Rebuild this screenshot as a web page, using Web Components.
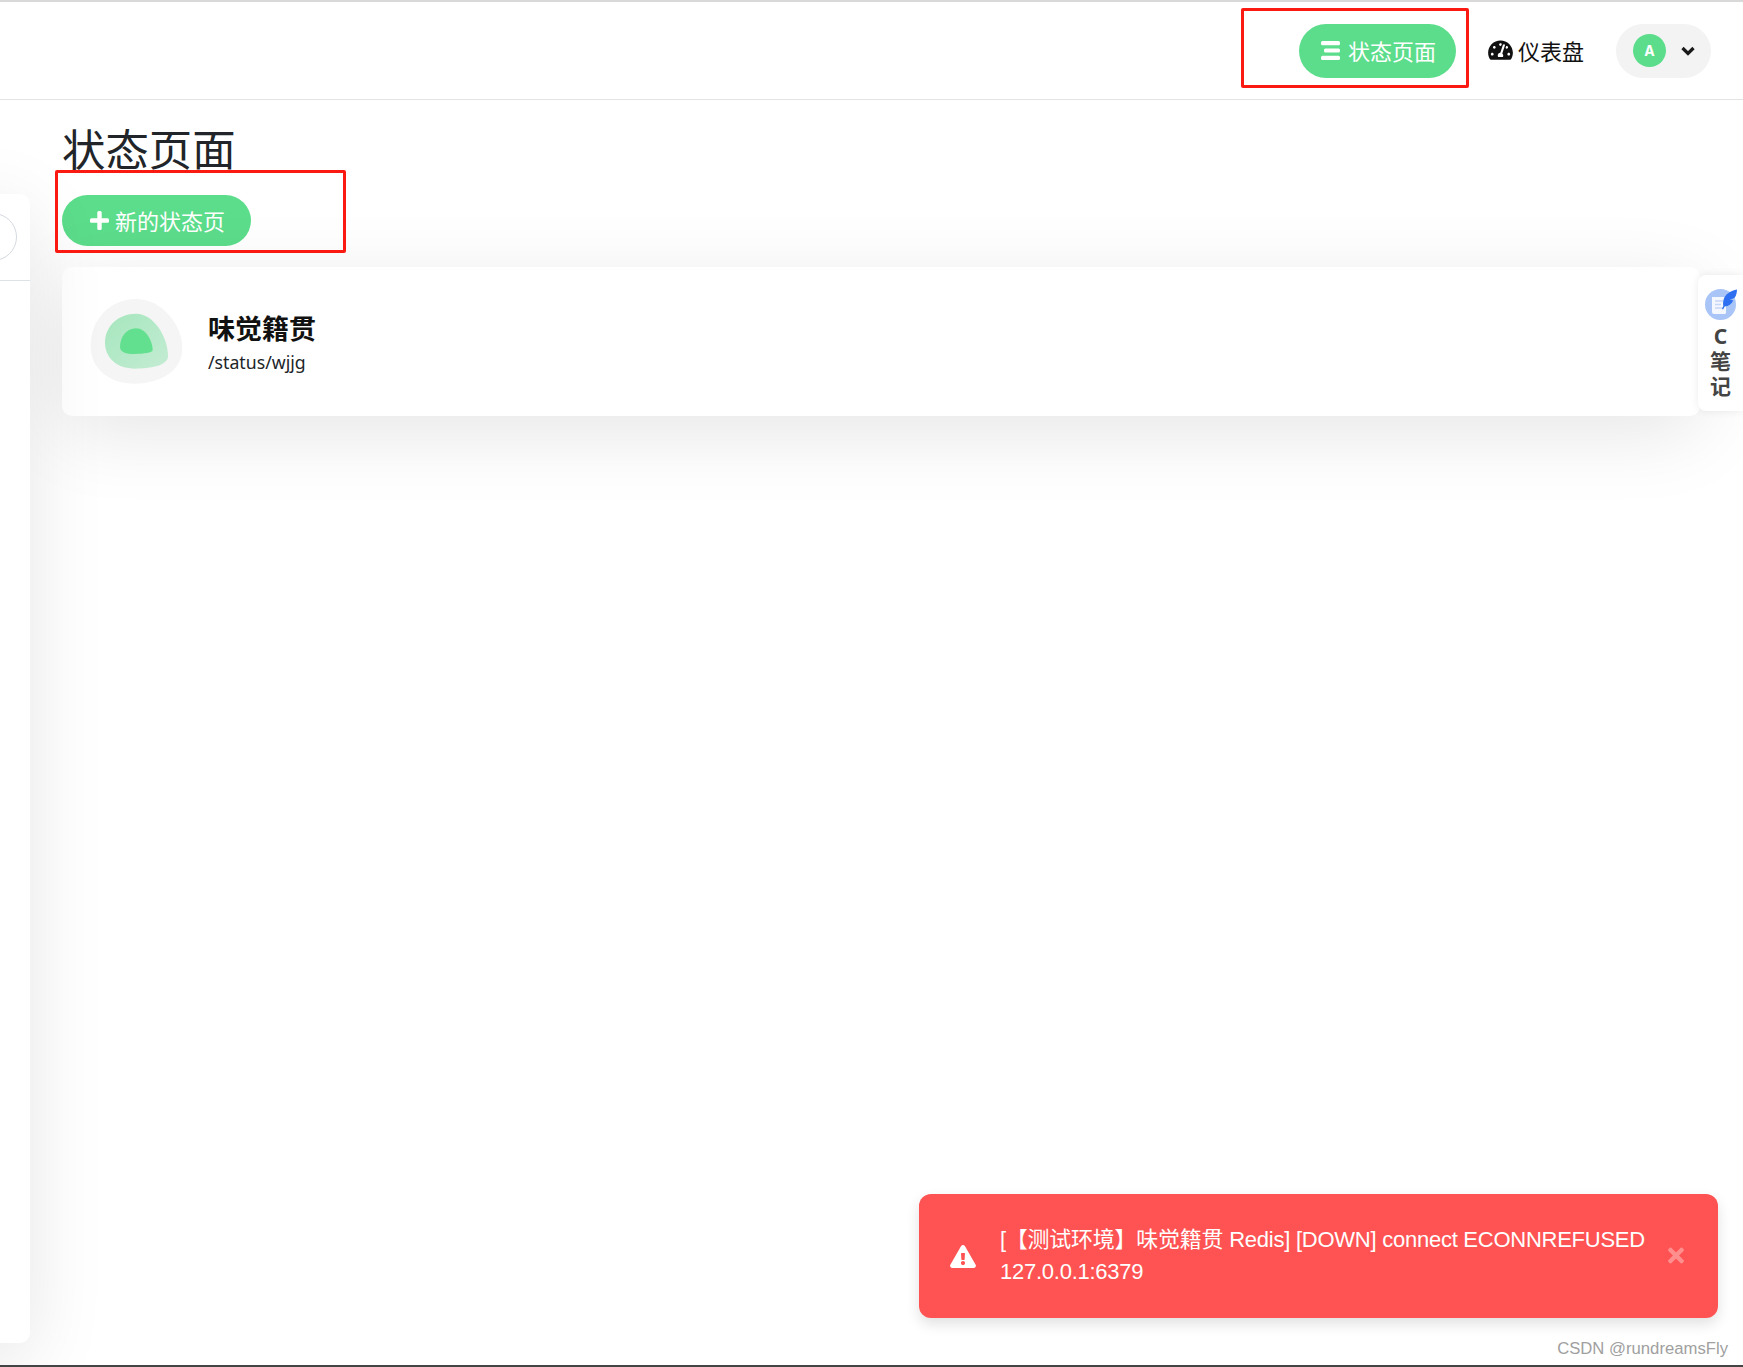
<!DOCTYPE html>
<html lang="zh">
<head>
<meta charset="utf-8">
<title>状态页面</title>
<style>
  html, body { margin: 0; height: 100%; }
  body {
    box-sizing: border-box;
    height: 1367px;
    overflow: hidden;
    display: flex;
    flex-direction: column;
    background: #fff;
    color: #212529;
    border-bottom: 2px solid #444;
    font-family: "Noto Sans", "Noto Sans CJK SC", sans-serif;
  }
</style>
</head>
<body>
  <top-bar>
    <pill-button icon="list" size="header">状态页面</pill-button>
    <nav-link>仪表盘</nav-link>
    <profile-pill>A</profile-pill>
  </top-bar>
  <status-page heading="状态页面">
    <pill-button icon="plus" size="new">新的状态页</pill-button>
    <status-card name="味觉籍贯" slug="/status/wjjg"></status-card>
  </status-page>
  <mark-box style="left:1241px;top:8px;width:228px;height:80px"></mark-box>
  <mark-box style="left:55px;top:170px;width:291px;height:83px"></mark-box>
  <note-tab>C笔记</note-tab>
  <alert-toast>[【测试环境】味觉籍贯 Redis] [DOWN] connect ECONNREFUSED 127.0.0.1:6379</alert-toast>
  <water-mark>CSDN @rundreamsFly</water-mark>

<script>
class TopBar extends HTMLElement {
  connectedCallback() {
    this.attachShadow({ mode: 'open' });
    this.shadowRoot.innerHTML = `
      <style>
        :host {
          display: flex;
          flex: none;
          box-sizing: border-box;
          height: 100px;
          align-items: center;
          justify-content: flex-end;
          gap: 32px;
          padding-right: 32px;
          border-top: 2px solid #d9d9d9;
          border-bottom: 1px solid #e3e3e3;
        }
      </style>
      <slot></slot>`;
  }
}

class PillButton extends HTMLElement {
  connectedCallback() {
    const icons = {
      list: `<svg width="19" height="19" viewBox="0 0 19 19" fill="#fff"><rect x="0" y="0" width="19" height="4.200" rx="1.500"/><rect x="3" y="7.400" width="16" height="4.200" rx="1.500"/><rect x="0" y="14.800" width="19" height="4.200" rx="1.500"/></svg>`,
      plus: `<svg width="19" height="19" viewBox="0 0 19 19" fill="#fff"><rect x="7.300" y="0" width="4.400" height="19" rx="1.500"/><rect x="0" y="7.300" width="19" height="4.400" rx="1.500"/></svg>`
    };
    this.attachShadow({ mode: 'open' });
    this.shadowRoot.innerHTML = `
      <style>
        :host {
          display: inline-flex;
          width: max-content;
          align-items: center;
          box-sizing: border-box;
          background: #5cdd8b;
          color: #fff;
          font-size: 22px;
          border-radius: 27px;
        }
        :host([size="header"]) { height: 54px; padding: 0 20px 1px 22px; gap: 8px; }
        :host([size="new"]) { height: 51px; padding: 0 26px 1px 28px; gap: 6px; }
        svg { display: block; }
      </style>
      ${icons[this.getAttribute('icon')]}<slot></slot>`;
  }
}

class NavLink extends HTMLElement {
  connectedCallback() {
    this.attachShadow({ mode: 'open' });
    this.shadowRoot.innerHTML = `
      <style>
        :host { display: inline-flex; align-items: center; gap: 5px; font-size: 22px; color: #111; padding-bottom: 1px; }
        svg { display: block; }
      </style>
      <svg width="25" height="22" viewBox="0 0 576 512" fill="#111"><path d="M288 32C128.94 32 0 160.94 0 320c0 52.8 14.25 102.26 39.06 144.8 5.61 9.62 16.3 15.2 27.44 15.2h443c11.14 0 21.83-5.58 27.44-15.2C561.75 422.26 576 372.8 576 320c0-159.06-128.94-288-288-288zm0 64c14.71 0 26.58 10.13 30.32 23.65-1.11 2.26-2.64 4.23-3.45 6.67l-9.22 27.67c-5.13 3.49-10.97 6.01-17.64 6.01-17.67 0-32-14.33-32-32S270.33 96 288 96zM96 384c-17.67 0-32-14.33-32-32s14.33-32 32-32 32 14.33 32 32-14.33 32-32 32zm48-160c-17.67 0-32-14.33-32-32s14.33-32 32-32 32 14.33 32 32-14.33 32-32 32zm246.77-72.41l-61.33 184C343.13 347.33 352 364.54 352 384c0 11.72-3.38 22.55-8.88 32H232.88c-5.5-9.45-8.88-20.28-8.88-32 0-33.94 26.5-61.43 59.9-63.59l61.34-184.01c4.17-12.56 17.73-19.45 30.36-15.17 12.57 4.19 19.35 17.77 15.17 30.36zm14.66 57.2l15.52-46.55c3.47-1.29 7.13-2.23 11.05-2.23 17.67 0 32 14.33 32 32s-14.33 32-32 32c-11.38-.01-20.89-6.28-26.57-15.22zM480 384c-17.67 0-32-14.33-32-32s14.33-32 32-32 32 14.33 32 32-14.33 32-32 32z"/></svg>
      <slot></slot>`;
  }
}

class ProfilePill extends HTMLElement {
  connectedCallback() {
    this.attachShadow({ mode: 'open' });
    this.shadowRoot.innerHTML = `
      <style>
        :host {
          display: inline-flex;
          box-sizing: border-box;
          width: 95px;
          height: 54px;
          align-items: center;
          padding-left: 17px;
          gap: 15px;
          background: #f3f3f3;
          border-radius: 27px;
        }
        .avatar {
          display: flex;
          width: 33px;
          height: 33px;
          align-items: center;
          justify-content: center;
          border-radius: 50%;
          background: #5cdd8b;
          color: #fff;
          font: bold 14px "Inter", "Liberation Sans", sans-serif;
        }
        svg { display: block; }
      </style>
      <div class="avatar"><slot></slot></div>
      <svg width="14" height="10" viewBox="0 0 14 10" fill="none" stroke="#1a1a1a" stroke-width="3.2"><path d="M1.5 2l5.5 5.5L12.5 2"/></svg>`;
  }
}

class StatusPage extends HTMLElement {
  connectedCallback() {
    this.attachShadow({ mode: 'open' });
    this.shadowRoot.innerHTML = `
      <style>
        :host {
          display: grid;
          flex: 1;
          min-height: 0;
          grid-template-columns: 30px 1fr;
          grid-template-rows: auto 1fr;
          column-gap: 32px;
          row-gap: 18px;
          padding: 24px 43px 22px 0;
        }
        h1 {
          grid-column: 2;
          margin: 0;
          font-size: 43.4px;
          font-weight: 400;
          line-height: 52px;
          color: #212529;
        }
        /* the list panel runs off the left edge of the window */
        .side { grid-column: 1; grid-row: 2; margin-left: -300px; }
        .content {
          grid-column: 2;
          grid-row: 2;
          display: flex;
          flex-direction: column;
          gap: 21px;
          padding-top: 1px;
        }
      </style>
      <h1>${this.getAttribute('heading')}</h1>
      <side-panel class="side"></side-panel>
      <div class="content"><slot></slot></div>`;
  }
}

class SidePanel extends HTMLElement {
  connectedCallback() {
    this.attachShadow({ mode: 'open' });
    this.shadowRoot.innerHTML = `
      <style>
        :host {
          display: block;
          position: relative;
          height: 100%;
          background: #fff;
          border-radius: 10px;
          box-shadow: 0 17px 78px rgba(0, 0, 0, .1);
          overflow: hidden;
        }
        .search {
          box-sizing: border-box;
          width: 100px;
          height: 48px;
          margin: 19px 0 0 217px;
          border: 1px solid #d5d9e0;
          border-radius: 24px;
        }
        .rule { margin-top: 19px; border-top: 1px solid #dee2e6; }
      </style>
      <div class="search"></div>
      <div class="rule"></div>`;
  }
}

class StatusCard extends HTMLElement {
  connectedCallback() {
    this.attachShadow({ mode: 'open' });
    this.shadowRoot.innerHTML = `
      <style>
        :host {
          display: flex;
          box-sizing: border-box;
          height: 149px;
          align-items: center;
          gap: 24px;
          padding-left: 28px;
          background: #fff;
          border-radius: 10px;
          box-shadow: 0 17px 78px rgba(0, 0, 0, .1);
        }
        svg { display: block; flex: none; }
        .meta { padding-top: 2px; }
        .name { font-size: 27px; font-weight: 700; line-height: 36px; color: #111; }
        .slug { margin-top: 2px; font-size: 17.7px; line-height: 26px; color: #212529; }
      </style>
      <svg width="94" height="87" viewBox="120 115 282 261">
        <defs>
          <linearGradient id="mid" x1="0" y1="0" x2="1" y2="1">
            <stop offset="0" stop-color="#a5e6bd"/>
            <stop offset="1" stop-color="#c4ecd3"/>
          </linearGradient>
        </defs>
        <path fill="#f5f5f5" d="M258 118C335 118 397 195 397 265C397 340 320 372 255 372C175 372 122 325 122 258C122 180 180 118 258 118Z"/>
        <path fill="url(#mid)" d="M258 162C310 162 354 230 354 290C354 318 300 327 255 327C200 327 165 295 165 248C165 200 205 162 258 162Z"/>
        <path fill="#63e08f" d="M258 206C288 206 308 245 308 272C308 279 280 283 255 283C228 283 210 278 210 262C210 232 230 206 258 206Z"/>
      </svg>
      <div class="meta">
        <div class="name">${this.getAttribute('name')}</div>
        <div class="slug">${this.getAttribute('slug')}</div>
      </div>`;
  }
}

class MarkBox extends HTMLElement {
  connectedCallback() {
    this.attachShadow({ mode: 'open' });
    this.shadowRoot.innerHTML = `
      <style>
        :host {
          display: block;
          position: absolute;
          box-sizing: border-box;
          border: 3px solid #fb1a12;
          border-radius: 2px;
          pointer-events: none;
        }
      </style>`;
  }
}

class NoteTab extends HTMLElement {
  connectedCallback() {
    this.attachShadow({ mode: 'open' });
    this.shadowRoot.innerHTML = `
      <style>
        :host {
          display: flex;
          position: absolute;
          left: 1698px;
          top: 275px;
          box-sizing: border-box;
          width: 45px;
          height: 136px;
          flex-direction: column;
          align-items: center;
          padding-top: 13px;
          background: #fff;
          border-radius: 8px 0 0 8px;
          box-shadow: 0 0 8px rgba(0, 0, 0, .08);
        }
        svg { display: block; }
        .label {
          width: 21px;
          margin-top: 3px;
          text-align: center;
          font-size: 21px;
          font-weight: 700;
          line-height: 25px;
          color: #444;
          word-break: break-all;
        }
      </style>
      <svg width="33" height="33" viewBox="0 0 33 33">
        <circle cx="16.500" cy="16.500" r="15.500" fill="#a9c4f6"/>
        <path fill="#f4f7fe" d="M8 9h14v15.500a1.500 1.500 0 0 1-1.500 1.500H10a2 2 0 0 1-2-2Z"/>
        <path stroke="#c6d6f8" stroke-width="1.400" d="M11 13h8M11 16.500h6M11 20h8"/>
        <path fill="#2d6ff0" d="M33 1.500C27 2.500 21 6 19.500 12c-.6 2.500-.5 4-.2 6l-1.300 3 1.100.5 1.500-3c4-.5 7-2.300 8.800-6.300l-3.500-.2 4.700-2.300C32 8 33 5 33 1.500Z"/>
      </svg>
      <div class="label"><slot></slot></div>`;
  }
}

class AlertToast extends HTMLElement {
  connectedCallback() {
    this.attachShadow({ mode: 'open' });
    this.shadowRoot.innerHTML = `
      <style>
        :host {
          display: flex;
          position: absolute;
          left: 919px;
          top: 1194px;
          box-sizing: border-box;
          width: 799px;
          height: 124px;
          align-items: center;
          padding: 0 34px 0 31px;
          gap: 24px;
          background: #ff5353;
          color: #fff;
          border-radius: 12px;
          box-shadow: 0 6px 14px rgba(0, 0, 0, .12);
        }
        svg { display: block; flex: none; }
        .text {
          flex: 1;
          margin-right: -10px;
          font: 22px/32px "Liberation Sans", "Noto Sans CJK SC", sans-serif;
          letter-spacing: -.25px;
          text-spacing-trim: space-all;
        }
        .close { margin-top: -2px; }
      </style>
      <svg width="26" height="23" viewBox="0 0 576 512" fill="#fff"><path d="M569.517 440.013C587.975 472.007 564.806 512 527.94 512H48.054c-36.937 0-59.999-40.055-41.577-71.987L246.423 24c18.467-32.009 64.72-31.951 83.154 0l239.94 416.013zM288 354c-25.405 0-46 20.595-46 46s20.595 46 46 46 46-20.595 46-46-20.595-46-46-46zm-43.673-165.346l7.418 136c.347 6.364 5.609 11.346 11.982 11.346h48.546c6.373 0 11.635-4.982 11.982-11.346l7.418-136c.375-6.874-5.098-12.654-11.982-12.654h-63.383c-6.884 0-12.356 5.780-11.981 12.654z"/></svg>
      <div class="text"><slot></slot></div>
      <svg class="close" width="16" height="23" viewBox="0 0 352 512" fill="#fff" opacity=".35"><path d="M242.72 256l100.07-100.07c12.28-12.28 12.28-32.19 0-44.48l-22.24-22.24c-12.28-12.28-32.19-12.28-44.48 0L176 189.28 75.93 89.21c-12.28-12.28-32.19-12.28-44.48 0L9.21 111.45c-12.28 12.28-12.28 32.19 0 44.48L109.28 256 9.21 356.07c-12.28 12.28-12.28 32.19 0 44.48l22.24 22.24c12.28 12.28 32.2 12.28 44.48 0L176 322.72l100.07 100.07c12.28 12.28 32.2 12.28 44.48 0l22.24-22.24c12.28-12.28 12.28-32.19 0-44.48L242.72 256z"/></svg>`;
  }
}

class WaterMark extends HTMLElement {
  connectedCallback() {
    this.attachShadow({ mode: 'open' });
    this.shadowRoot.innerHTML = `
      <style>
        :host {
          display: block;
          position: absolute;
          right: 15px;
          top: 1339px;
          font: 16.7px/20px "Liberation Sans", sans-serif;
          color: #a0a0a0;
        }
      </style>
      <slot></slot>`;
  }
}

customElements.define('top-bar', TopBar);
customElements.define('pill-button', PillButton);
customElements.define('nav-link', NavLink);
customElements.define('profile-pill', ProfilePill);
customElements.define('status-page', StatusPage);
customElements.define('side-panel', SidePanel);
customElements.define('status-card', StatusCard);
customElements.define('mark-box', MarkBox);
customElements.define('note-tab', NoteTab);
customElements.define('alert-toast', AlertToast);
customElements.define('water-mark', WaterMark);
</script>
</body>
</html>
